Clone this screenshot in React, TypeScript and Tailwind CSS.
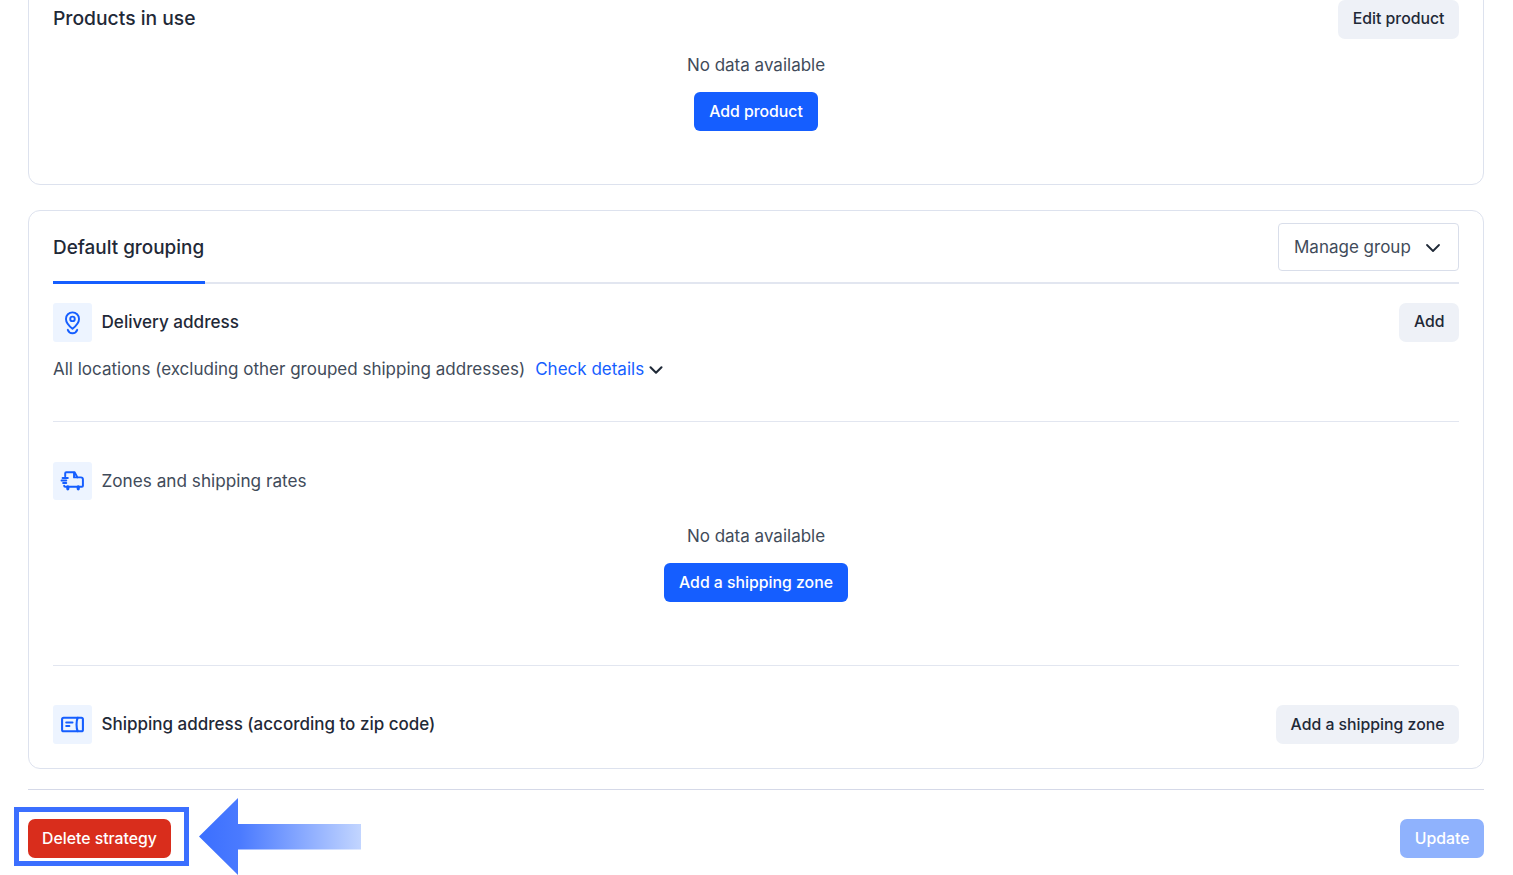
import React from "react";
import { ChevronDown } from "lucide-react";

function IconBox({ children }: { children: React.ReactNode }) {
  return (
    <div className="flex h-[38.5px] w-[38.5px] shrink-0 items-center justify-center rounded-[3px] bg-[#edf4ff]">
      {children}
    </div>
  );
}

function GreyBtn({ children }: { children: React.ReactNode }) {
  return (
    <button className="flex h-[38.5px] items-center rounded-[7px] bg-[#eef1f7] px-[14.5px] text-[15.8px] font-medium text-[#1f2937]">
      {children}
    </button>
  );
}

function BlueBtn({ children }: { children: React.ReactNode }) {
  return (
    <button className="flex h-[38.5px] items-center rounded-[6px] bg-[#155eff] px-[15.5px] pt-[1px] text-[15.8px] font-medium text-white">
      {children}
    </button>
  );
}

function Empty({ label }: { label: string }) {
  return (
    <div className="flex flex-col items-center">
      <p className="text-[17px] leading-[24px] text-[#414b5a]">No data available</p>
      <div className="mt-[15.5px]">
        <BlueBtn>{label}</BlueBtn>
      </div>
    </div>
  );
}

export default function App() {
  return (
    <div
      className="relative h-[875px] w-[1513px] overflow-hidden bg-white pl-[27.5px] pr-[29px]"
      style={{ fontFamily: "Inter, 'Liberation Sans', sans-serif" }}
    >
      <section className="mt-[-20px] h-[205px] rounded-[12px] border border-[#dde2ee] pl-[24.5px] pr-[24px] pt-[19px]">
        <div className="flex h-[38.5px] items-center justify-between">
          <h2 className="pb-[1px] text-[19.3px] font-medium text-[#1f2937]">Products in use</h2>
          <GreyBtn>Edit product</GreyBtn>
        </div>
        <div className="mt-[14px]">
          <Empty label="Add product" />
        </div>
      </section>

      <section className="mt-[25px] h-[559px] rounded-[12px] border border-[#dde2ee] pl-[24.5px] pr-[24px]">
        <div className="flex h-[73px] items-center justify-between border-b-2 border-[#e2e6f0]">
          <div className="relative flex h-full w-[152px] items-center pt-[3px]">
            <h2 className="whitespace-nowrap text-[18.9px] font-medium text-[#1f2937]">Default grouping</h2>
            <div className="absolute bottom-[-2px] left-0 h-[3px] w-full bg-[#155eff]" />
          </div>
          <button className="mt-[1px] flex h-[48px] w-[181px] items-center justify-between rounded-[4px] border border-[#d9deea] pl-[15px] pr-[13px] pt-[1px] text-[17px] text-[#414b5a]">
            Manage group
            <ChevronDown size={24} strokeWidth={1.8} className="text-[#1f2937]" />
          </button>
        </div>

        <div className="mt-[19px] flex items-center justify-between">
          <div className="flex items-center gap-[10px]">
            <IconBox>
              <svg width="27" height="27" viewBox="0 0 24 24" fill="none" stroke="#155eff" strokeWidth="1.7" strokeLinecap="round" strokeLinejoin="round">
                <path d="M12 17.500c-3-2.400-5.800-5-5.800-8.700a5.800 5.800 0 0 1 11.600 0c0 3.700-2.800 6.300-5.800 8.700z" />
                <circle cx="12" cy="8.800" r="2" />
                <path d="M7.800 18.500c.7 1.900 2.300 3 4.200 3s3.500-1.100 4.200-3" />
              </svg>
            </IconBox>
            <span className="text-[17.1px] font-medium text-[#1f2937]">Delivery address</span>
          </div>
          <GreyBtn>Add</GreyBtn>
        </div>

        <div className="mt-[16px] flex h-[24px] items-center text-[17px]">
          <span className="text-[#414b5a]">All locations (excluding other grouped shipping addresses)</span>
          <span className="ml-[10px] text-[#155eff]">Check details</span>
          <ChevronDown size={22} strokeWidth={2.3} className="ml-[1px] text-[#1f2937]" />
        </div>

        <div className="mt-[39.5px] h-px bg-[#e2e6f0]" />

        <div className="mt-[39.5px] flex items-center gap-[10px]">
          <IconBox>
            <svg width="25" height="25" viewBox="0 0 24 24" fill="none" stroke="#155eff" strokeWidth="1.9" strokeLinecap="round" strokeLinejoin="round">
              <path d="M5 8V5a1 1 0 0 1 1-1h8l2.700 5H20a2 2 0 0 1 2 2v6a1 1 0 0 1-1 1H5a1 1 0 0 1-1-1" />
              <path d="M13.500 4.500V9h3" />
              <path d="M7.500 18v2M17.500 18v2" strokeWidth="3" />
              <path d="M2.500 9.500h5M1.500 12h4.500M3 14.500h3" />
            </svg>
          </IconBox>
          <span className="pt-[1px] text-[17.2px] text-[#414b5a]">Zones and shipping rates</span>
        </div>

        <div className="mt-[23.5px]">
          <Empty label="Add a shipping zone" />
        </div>

        <div className="mt-[63px] h-px bg-[#e2e6f0]" />

        <div className="mt-[39.5px] flex items-center justify-between">
          <div className="flex items-center gap-[10px]">
            <IconBox>
              <svg width="25" height="25" viewBox="0 0 24 24" fill="none" stroke="#155eff" strokeWidth="2" strokeLinecap="round" strokeLinejoin="round">
                <path d="M17 5.500H3.500A1.500 1.500 0 0 0 2 7v10a1.500 1.500 0 0 0 1.500 1.500H17c-1.500-3-1.500-10 0-13z" />
                <path d="M17 5.500h3.500A1.500 1.500 0 0 1 22 7v10a1.500 1.500 0 0 1-1.500 1.500H17" />
                <path d="M6 10h6M6 13.500h3" />
              </svg>
            </IconBox>
            <span className="pt-[1px] text-[17px] font-medium text-[#1f2937]">Shipping address (according to zip code)</span>
          </div>
          <GreyBtn><span className="pt-[1px]">Add a shipping zone</span></GreyBtn>
        </div>
      </section>

      <div className="mt-[20px] h-px bg-[#d5d9e8]" />

      <div className="mt-[29px] flex items-center justify-between">
        <button className="flex h-[38.5px] items-center rounded-[7px] bg-[#d92d1c] px-[14.5px] pt-[1px] text-[15.8px] font-medium text-white">
          Delete strategy
        </button>
        <button className="flex h-[38.5px] items-center rounded-[7px] bg-[#8fb2fd] px-[14.5px] pt-[1px] text-[15.8px] font-medium text-white">
          Update
        </button>
      </div>

      <div className="absolute left-[14px] top-[807px] h-[59px] w-[175px] border-[5px] border-[#3b6fff]" />
      <svg className="absolute left-[199px] top-[798px]" width="162" height="77" viewBox="0 0 162 77">
        <defs>
          <linearGradient id="arrowFill" x1="0" y1="0" x2="1" y2="0">
            <stop offset="0" stopColor="#3b6fff" />
            <stop offset="0.25" stopColor="#4a7aff" />
            <stop offset="1" stopColor="#c2d5ff" />
          </linearGradient>
        </defs>
        <polygon points="0,38.500 39,0 39,26 162,26 162,51.500 39,51.500 39,77" fill="url(#arrowFill)" />
      </svg>
    </div>
  );
}
